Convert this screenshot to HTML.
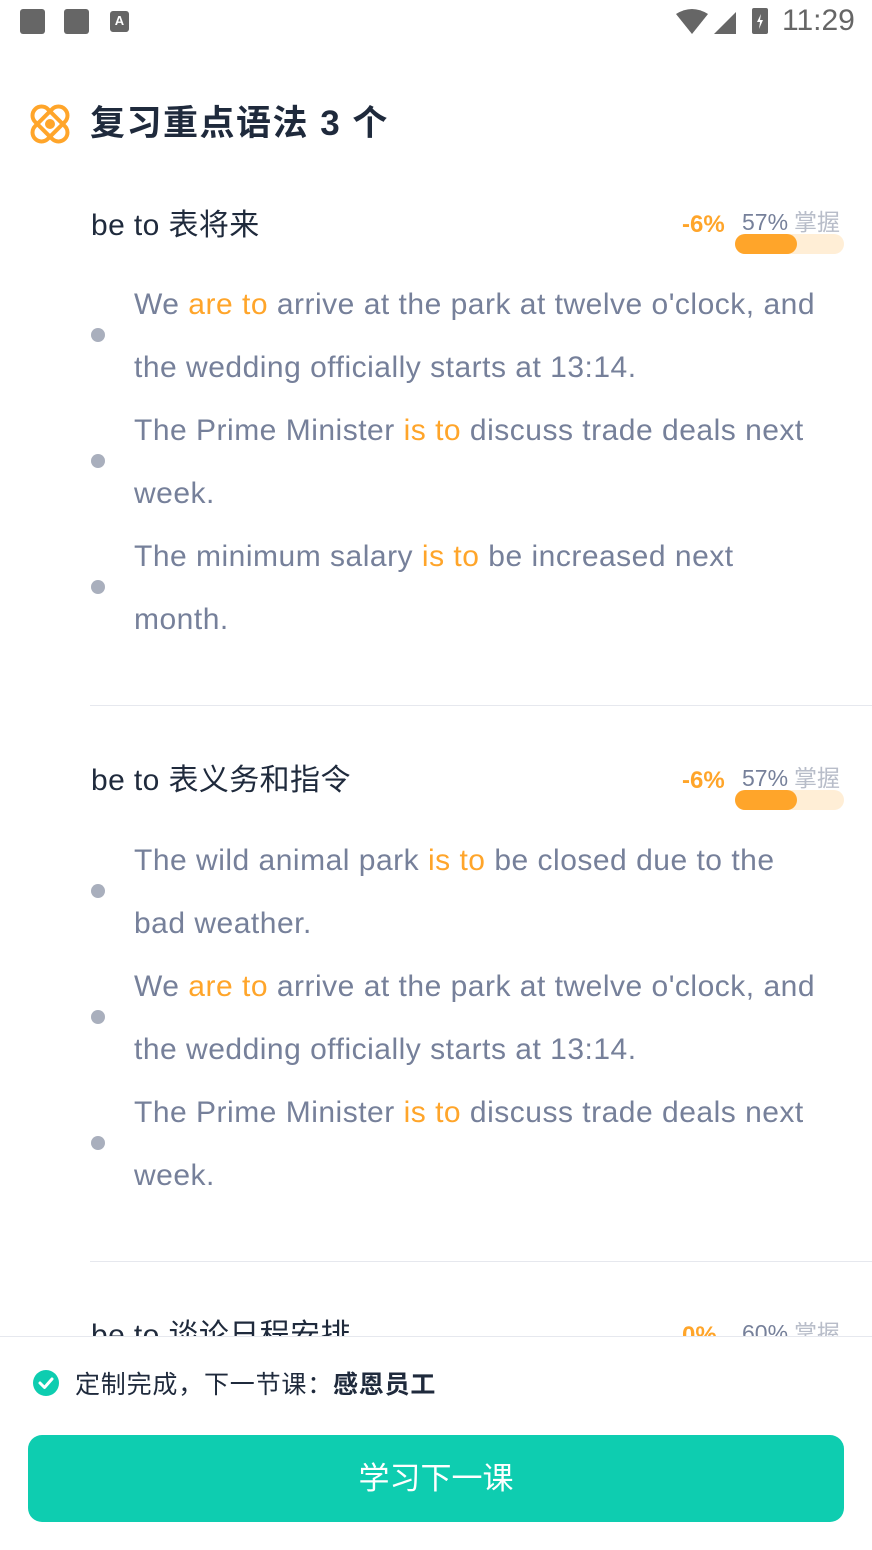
<!DOCTYPE html>
<html><head><meta charset="utf-8"><style>
*{margin:0;padding:0;box-sizing:border-box}
body{width:872px;height:1550px;position:relative;background:#fff;overflow:hidden;font-family:"Liberation Sans","Noto Sans CJK SC",sans-serif}
.a{position:absolute;white-space:nowrap}
.sb{background:#666;border-radius:3px}
.t{font-size:30px;color:#1f2a3c;line-height:40px;letter-spacing:0.4px}
.l{font-size:30px;color:#76809a;line-height:63px;left:134px;letter-spacing:0.5px}
.o{color:#ffa52a}
.dot{width:14px;height:14px;border-radius:50%;background:#a9afbd;left:91px}
.hr{left:90px;right:0;height:1px;background:#e6e8ee}
.neg{font-size:24px;font-weight:bold;color:#ffa52a;left:682px}
.pct{font-size:23px;color:#76809a;left:742px}
.pct span{color:#b8bdc9;margin-left:6px}
.bar{left:735px;width:109px;height:20px;border-radius:10px;background:#ffeed6}
.bar i{display:block;width:62px;height:20px;border-radius:10px;background:#ffa52a}
</style></head><body>
<div class="a sb" style="left:20px;top:9px;width:25px;height:25px"></div>
<div class="a sb" style="left:64px;top:9px;width:25px;height:25px"></div>
<div class="a sb" style="left:110px;top:11px;width:19px;height:21px;color:#fff;font-size:13px;font-weight:bold;text-align:center;line-height:19px">A</div>
<svg class="a" style="left:676px;top:8px" width="62" height="28"><path d="M0 6 Q16 -4 32 6 L16 26Z" fill="#666"/><path d="M60 4 L60 26 L38 26Z" fill="#666"/></svg>
<div class="a" style="left:752px;top:8px;width:16px;height:26px;background:#666;border-radius:2px"><svg width="16" height="26"><path d="M9 6 L5 14 L8 14 L7 21 L11 12 L8 12Z" fill="#fff"/></svg></div>
<div class="a" style="left:782px;top:4px;font-size:30px;color:#666">11:29</div>

<svg class="a" style="left:27px;top:101px" width="46" height="46" viewBox="0 0 46 46"><g fill="none" stroke="#ffa52a" stroke-width="4"><rect x="2" y="14" width="42" height="18" rx="9" transform="rotate(45 23 23)"/><rect x="2" y="14" width="42" height="18" rx="9" transform="rotate(-45 23 23)"/></g><circle cx="23" cy="23" r="5" fill="#ffa52a"/></svg>
<div class="a" style="left:90px;top:102px;font-size:35px;font-weight:bold;color:#1f2a3c;line-height:44px;letter-spacing:1.5px">复习重点语法 3 个</div>

<div class="a t" style="left:91px;top:206px">be to 表将来</div>
<div class="a neg" style="top:211px">-6%</div>
<div class="a pct" style="top:203px">57%<span>掌握</span></div>
<div class="a bar" style="top:234px"><i></i></div>
<div class="a l" style="top:273px">We <span class="o">are to</span> arrive at the park at twelve o'clock, and</div>
<div class="a l" style="top:336px">the wedding officially starts at 13:14.</div>
<div class="a dot" style="top:328px"></div>
<div class="a l" style="top:399px">The Prime Minister <span class="o">is to</span> discuss trade deals next</div>
<div class="a l" style="top:462px">week.</div>
<div class="a dot" style="top:454px"></div>
<div class="a l" style="top:525px">The minimum salary <span class="o">is to</span> be increased next</div>
<div class="a l" style="top:588px">month.</div>
<div class="a dot" style="top:580px"></div>
<div class="a hr" style="top:705px"></div>

<div class="a t" style="left:91px;top:761px">be to 表义务和指令</div>
<div class="a neg" style="top:767px">-6%</div>
<div class="a pct" style="top:759px">57%<span>掌握</span></div>
<div class="a bar" style="top:790px"><i></i></div>
<div class="a l" style="top:829px">The wild animal park <span class="o">is to</span> be closed due to the</div>
<div class="a l" style="top:892px">bad weather.</div>
<div class="a dot" style="top:884px"></div>
<div class="a l" style="top:955px">We <span class="o">are to</span> arrive at the park at twelve o'clock, and</div>
<div class="a l" style="top:1018px">the wedding officially starts at 13:14.</div>
<div class="a dot" style="top:1010px"></div>
<div class="a l" style="top:1081px">The Prime Minister <span class="o">is to</span> discuss trade deals next</div>
<div class="a l" style="top:1144px">week.</div>
<div class="a dot" style="top:1136px"></div>
<div class="a hr" style="top:1261px"></div>

<div class="a t" style="left:91px;top:1316px">be to 谈论日程安排</div>
<div class="a neg" style="top:1322px">0%</div>
<div class="a pct" style="top:1314px">60%<span>掌握</span></div>

<div class="a" style="left:0;top:1336px;width:872px;height:214px;background:#fff;border-top:1px solid #e6e8ee"></div>
<svg class="a" style="left:32px;top:1369px" width="28" height="28"><circle cx="14" cy="14" r="13" fill="#0ecdb0"/><path d="M8 14 L12.5 18.5 L20 10" fill="none" stroke="#fff" stroke-width="3" stroke-linecap="round" stroke-linejoin="round"/></svg>
<div class="a" style="left:75px;top:1369px;font-size:25px;color:#1f2a3c;line-height:32px;letter-spacing:0.8px">定制完成，下一节课：<b>感恩员工</b></div>
<div class="a" style="left:28px;top:1435px;width:816px;height:87px;border-radius:14px;background:#0ecdb0;color:#fff;font-size:31px;text-align:center;line-height:87px">学习下一课</div>
</body></html>
